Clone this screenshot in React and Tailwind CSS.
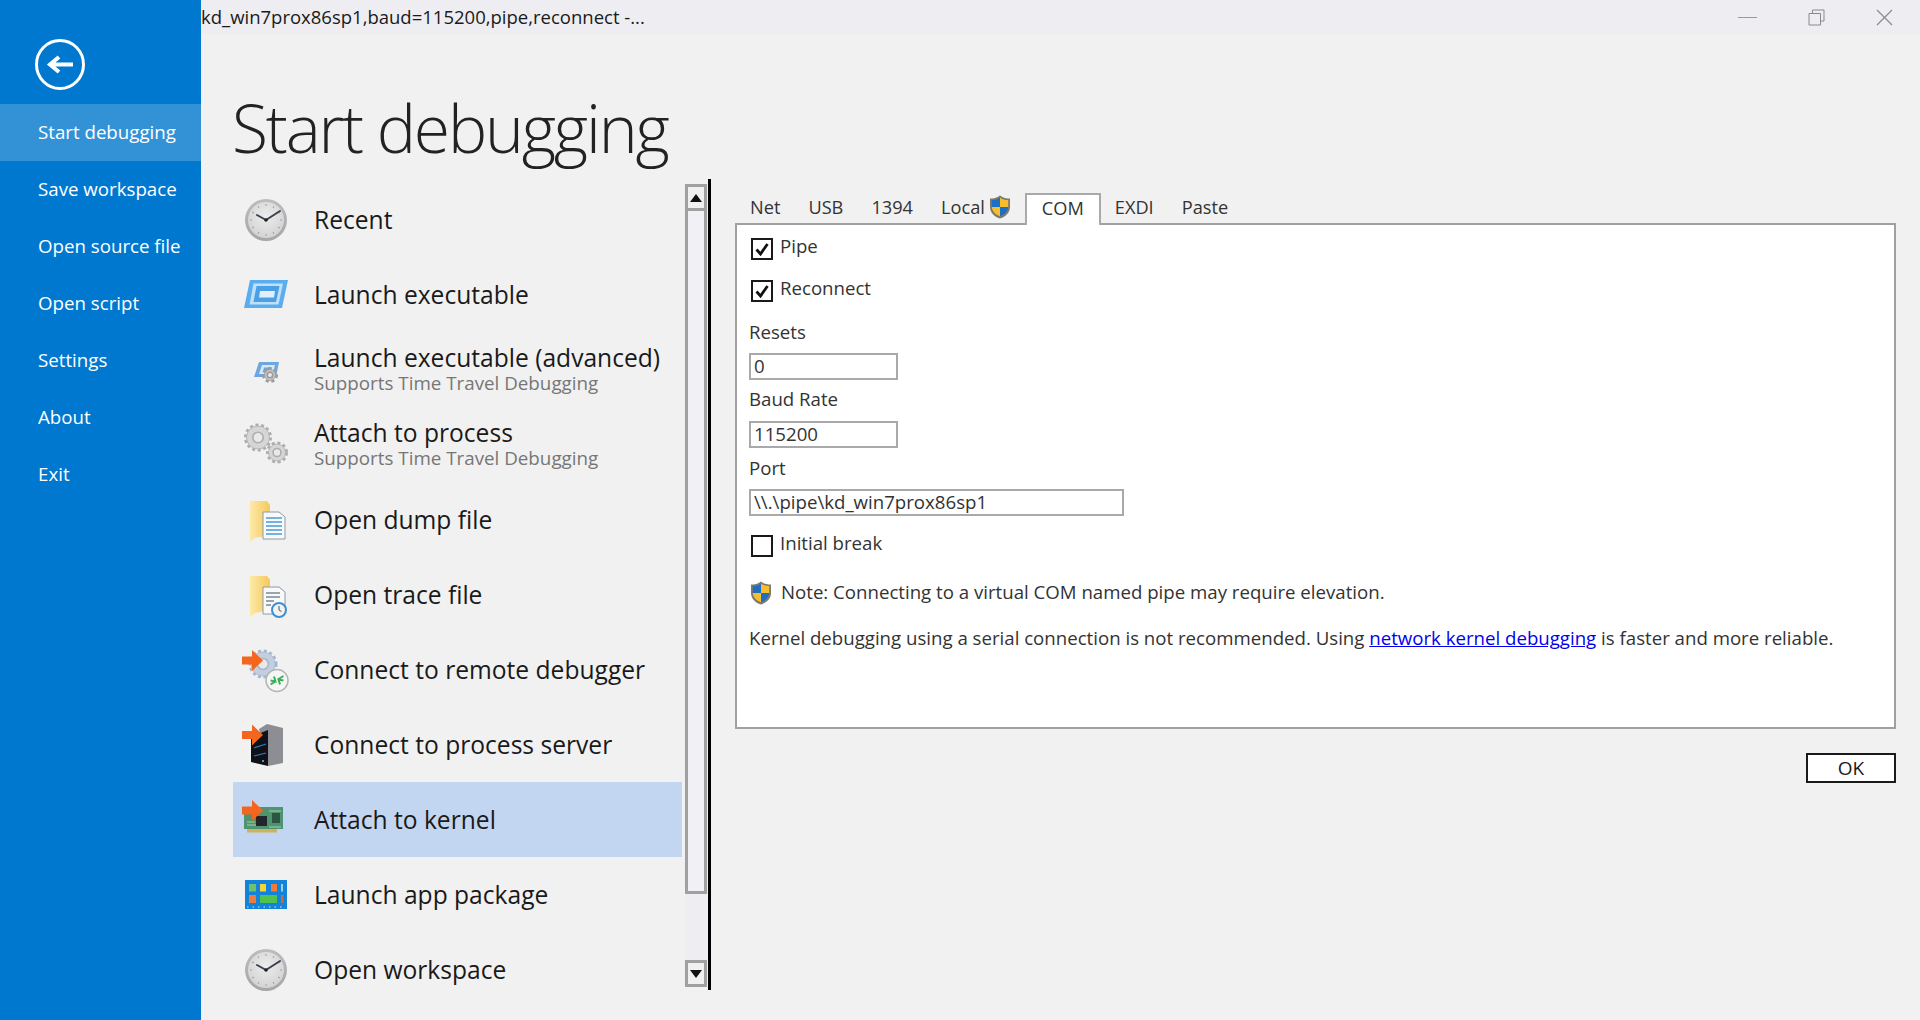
const sidebarItems = ['Start debugging', 'Save workspace', 'Open source file', 'Open script', 'Settings', 'About', 'Exit'];

function Gear({ cx, cy, r, color = '#adadad', fill = '#d6d6d6' }) {
  return (
    <g>
      <circle cx={cx} cy={cy} r={r} fill="none" stroke={color} strokeWidth="3" strokeDasharray="3 2.6" />
      <circle cx={cx} cy={cy} r={r - 1} fill={fill} stroke={color} strokeWidth="0.8" />
      <circle cx={cx} cy={cy} r={r * 0.42} fill="#e9e9e9" stroke={color} strokeWidth="1.6" />
    </g>
  );
}

function OrangeArrow() {
  return <path d="M0 10.500h10V4l11 10.500L10 25v-6.500H0z" fill="#f4661e" />;
}

function ClockIcon() {
  const ticks = [0, 30, 60, 90, 120, 150, 180, 210, 240, 270, 300, 330];
  return (
    <svg width="48" height="48" viewBox="0 0 48 48">
      <defs>
        <linearGradient id="clockRim" x1="0" y1="0" x2="0" y2="1">
          <stop offset="0" stopColor="#bdbdbd" />
          <stop offset="1" stopColor="#a6a6a6" />
        </linearGradient>
        <radialGradient id="clockFace" cx="0.5" cy="0.4" r="0.7">
          <stop offset="0" stopColor="#ececec" />
          <stop offset="1" stopColor="#cfcfcf" />
        </radialGradient>
      </defs>
      <circle cx="24" cy="24" r="21" fill="url(#clockRim)" />
      <circle cx="24" cy="24" r="18" fill="url(#clockFace)" />
      {ticks.map((a) => (
        <line key={a} x1="24" y1="8" x2="24" y2="10" stroke="#a0a0a0" strokeWidth="1" transform={`rotate(${a} 24 24)`} />
      ))}
      <path d="M24 24L15 19M24 24L38 15" stroke="#3a414c" strokeWidth="2" strokeLinecap="round" />
      <circle cx="24" cy="24" r="1.800" fill="#222" />
    </svg>
  );
}

function ExeIcon() {
  return (
    <svg width="48" height="48" viewBox="0 0 48 48">
      <path d="M8 9h38l-6 28H2z" fill="#5aaef0" />
      <path d="M11.500 12.500h29.500l-4.500 21H7.500z" fill="#bfe0f8" />
      <path d="M14.500 15h23l-3.500 16H11.500z" fill="#4a9fe6" />
      <path d="M18 20h15l-1 6.500H17z" fill="#dff0fb" />
    </svg>
  );
}

function ExeAdvIcon() {
  return (
    <svg width="48" height="48" viewBox="0 0 48 48">
      <path d="M17 16h20l-3 15H12z" fill="#6ea6e0" />
      <path d="M20 19h13l-2 9H17z" fill="#d8e8f6" />
      <path d="M22 21.500h8l-1 4H21z" fill="#6ea6e0" />
      <Gear cx={28} cy={29} r={6.500} color="#9a9a9a" fill="#c6c6c6" />
    </svg>
  );
}

function GearsIcon() {
  return (
    <svg width="48" height="48" viewBox="0 0 48 48">
      <Gear cx={16} cy={16.500} r={12.500} />
      <Gear cx={35} cy={31.500} r={9.500} />
    </svg>
  );
}

function DocFolder({ children }) {
  return (
    <svg width="48" height="48" viewBox="0 0 48 48">
      <defs>
        <linearGradient id="folderFill" x1="0" y1="0" x2="1" y2="0">
          <stop offset="0" stopColor="#fde9a8" />
          <stop offset="1" stopColor="#f5c95c" />
        </linearGradient>
      </defs>
      <path d="M8 5h17l3 4v30l-15 3-5 4z" fill="url(#folderFill)" />
      <path d="M21 16h16l6 5v22H21z" fill="#f7f9fb" stroke="#8f9aa5" strokeWidth="1" />
      {children}
    </svg>
  );
}

function DumpIcon() {
  return (
    <DocFolder>
      <path d="M24 22h16M24 26h16M24 30h16M24 34h16M24 38h16" stroke="#4a9ad8" strokeWidth="1.500" />
    </DocFolder>
  );
}

function TraceIcon() {
  return (
    <DocFolder>
      <path d="M24 22h14M24 26h14M24 30h8M24 34h5" stroke="#7d8893" strokeWidth="1.500" />
      <circle cx="37" cy="39" r="7" fill="#f2f2f2" stroke="#3f8fd0" strokeWidth="2" />
      <path d="M37 35V39l2.500 1.500" stroke="#555" strokeWidth="1" fill="none" />
    </DocFolder>
  );
}

function RemoteIcon() {
  return (
    <svg width="48" height="48" viewBox="0 0 48 48">
      <Gear cx={21} cy={18} r={13} color="#a5b6cd" fill="#c3cfde" />
      <circle cx="35" cy="34.500" r="11" fill="#f6f6f6" stroke="#b5b5b5" strokeWidth="1.500" />
      <path d="M28.500 38.500l5-3M36.500 33l5-3M32 30.500l1.500 5-5-1M38 38.500l-1.500-5 5 1" stroke="#3bae5a" strokeWidth="2" fill="none" />
      <OrangeArrow />
    </svg>
  );
}

function ServerIcon() {
  return (
    <svg width="48" height="48" viewBox="0 0 48 48">
      <path d="M17 8l8-5 16 4v35l-15 3z" fill="#8c8e93" />
      <path d="M9 16l17-7v36l-17-4z" fill="#0f1116" />
      <path d="M12 27l12-4M12 35l12-3" stroke="#2c7fc5" strokeWidth="1.200" />
      <circle cx="21" cy="40" r="1" fill="#8ab4d9" />
      <g transform="translate(0 -0.500)"><OrangeArrow /></g>
    </svg>
  );
}

function KernelIcon() {
  return (
    <svg width="48" height="48" viewBox="0 0 48 48">
      <rect x="2" y="11" width="39" height="22" fill="#4f9470" />
      <path d="M5 26h8M5 29h9M27 15h12M27 31h12M14 16v4" stroke="#9fd0a8" strokeWidth="1" />
      <rect x="14" y="20" width="11" height="10" fill="#20262b" />
      <rect x="30" y="17" width="8" height="10" fill="#2e5443" />
      <rect x="5" y="33" width="30" height="3.500" fill="#cfb260" />
      <OrangeArrow />
    </svg>
  );
}

function AppIcon() {
  return (
    <svg width="48" height="48" viewBox="0 0 48 48">
      <rect x="3" y="9" width="42" height="29" fill="#1283d8" />
      <rect x="7" y="13" width="7" height="7.500" fill="#6ec26a" />
      <rect x="18" y="13" width="6" height="7.500" fill="#f4d437" />
      <rect x="29" y="13" width="6" height="7.500" fill="#ee7b3b" />
      <rect x="39" y="13" width="2" height="7.500" fill="#8fd5f2" />
      <rect x="7" y="24" width="7" height="8" fill="#ee7b3b" />
      <rect x="18" y="24" width="17" height="8" fill="#4fc24f" />
      <rect x="39" y="24" width="2.500" height="8" fill="#c56b4a" />
      <path d="M5 36h38" stroke="#cfe7f8" strokeWidth="1" strokeDasharray="1.500 4" />
    </svg>
  );
}

const listItems = [
  { label: 'Recent', icon: <ClockIcon /> },
  { label: 'Launch executable', icon: <ExeIcon /> },
  { label: 'Launch executable (advanced)', sub: 'Supports Time Travel Debugging', icon: <ExeAdvIcon /> },
  { label: 'Attach to process', sub: 'Supports Time Travel Debugging', icon: <GearsIcon /> },
  { label: 'Open dump file', icon: <DumpIcon /> },
  { label: 'Open trace file', icon: <TraceIcon /> },
  { label: 'Connect to remote debugger', icon: <RemoteIcon /> },
  { label: 'Connect to process server', icon: <ServerIcon /> },
  { label: 'Attach to kernel', icon: <KernelIcon />, selected: true },
  { label: 'Launch app package', icon: <AppIcon /> },
  { label: 'Open workspace', icon: <ClockIcon /> }
];

function Shield({ className }) {
  return (
    <svg className={className} viewBox="0 0 22 24">
      <path d="M11 0.500C8 3 4.500 3.500 1 3.500V12c0 5.500 4 9.500 10 11.500 6-2 10-6 10-11.500V3.500C17.500 3.500 14 3 11 0.500z" fill="#7d7a6c" />
      <path d="M11 2.500V12H2.800V5C6 5 9 4.500 11 2.500z" fill="#1c6fc4" />
      <path d="M11 2.500V12h8.200V5C16 5 13 4.500 11 2.500z" fill="#f6be2c" />
      <path d="M11 12H2.800c.3 4.300 3.500 7.500 8.200 9.300z" fill="#f6be2c" />
      <path d="M11 12h8.200c-.3 4.300-3.500 7.500-8.200 9.300z" fill="#1c6fc4" />
    </svg>
  );
}

function Checkbox({ checked }) {
  return (
    <div className="w-[22px] h-[22px] border-2 border-[#1a1a1a] bg-white flex items-center justify-center shrink-0">
      {checked && (
        <svg width="16" height="16" viewBox="0 0 16 16">
          <path d="M2.500 8.500L6.500 13 13.500 3" fill="none" stroke="#111" strokeWidth="2.800" />
        </svg>
      )}
    </div>
  );
}

function CheckRow({ label, checked, className }) {
  return (
    <div className={`flex items-start gap-[7px] ml-[2px] ${className}`}>
      <Checkbox checked={checked} />
      <span className="leading-[16px]">{label}</span>
    </div>
  );
}

function Field({ value, className }) {
  return (
    <div className={`h-[27px] border-2 border-[#a9a9a9] pl-[3px] leading-[21px] ${className}`}>{value}</div>
  );
}

function ScrollButton({ down }) {
  return (
    <div className="h-[27px] border-[3px] border-[#a0a0a0] bg-[#f0f0f0] flex items-center justify-center shrink-0">
      <svg width="12" height="8" viewBox="0 0 12 8">
        <path d={down ? 'M0 0h12L6 8z' : 'M6 0l6 8H0z'} fill="#111" />
      </svg>
    </div>
  );
}

export default function App() {
  return (
    <div className="flex h-[1020px] overflow-hidden bg-[#f1f1f1] text-[#1a1a1a] font-['Open_Sans',sans-serif]">

      <div className="w-[201px] shrink-0 bg-[#0078cf] text-white">
        <div className="h-[104px] pl-[35px] pt-[39px]">
          <svg width="50" height="51" viewBox="0 0 50 51">
            <ellipse cx="25" cy="25.500" rx="23.500" ry="24" fill="none" stroke="#fff" strokeWidth="3" />
            <path d="M38 25.500H16M24 18l-9 7.500 9 7.500" fill="none" stroke="#fff" strokeWidth="4" />
          </svg>
        </div>
        {sidebarItems.map((item, i) => (
          <div key={item} className={`h-[57px] pl-[38px] flex items-center text-[18.700px] ${i === 0 ? 'bg-[#3392d6]' : ''}`}>
            {item}
          </div>
        ))}
      </div>

      <div className="flex-1 min-w-0 flex flex-col">
        <div className="h-[34px] bg-[#eeeef2] flex items-center justify-between shrink-0">
          <span className="text-[18.500px]">kd_win7prox86sp1,baud=115200,pipe,reconnect -...</span>
          <div className="flex items-center gap-[51px] pr-[27px] h-full">
            <div className="w-[19px] h-[1px] bg-[#9a9a9a]"></div>
            <svg width="17" height="17" viewBox="0 0 17 17">
              <path d="M4.500 4V1H16V12H13M1 4.500H12.500V16H1z" fill="none" stroke="#8a8a8a" />
            </svg>
            <svg width="17" height="17" viewBox="0 0 17 17">
              <path d="M1 1L16 16M16 1L1 16" stroke="#8a8a8a" strokeWidth="1.200" />
            </svg>
          </div>
        </div>

        <div className="h-[145px] shrink-0 pl-[31px] pt-[55px]">
          <h1 className="text-[66px] leading-[76px] font-light tracking-[-2.200px] text-[#222]">Start debugging</h1>
        </div>

        <div className="flex-1 flex pl-[32px] items-start">
          <div className="w-[449px] pt-[3px] shrink-0">
            {listItems.map((item) => (
              <div key={item.label} className={`h-[75px] pl-[9px] flex items-center gap-[24px] ${item.selected ? 'bg-[#c3d6f1]' : ''}`}>
                <div className="w-[48px] h-[48px] shrink-0">{item.icon}</div>
                <div>
                  <p className="text-[24.600px] leading-[27px]">{item.label}</p>
                  {item.sub && <p className="text-[18.800px] leading-[25px] text-[#767676]">{item.sub}</p>}
                </div>
              </div>
            ))}
          </div>

          <div className="ml-[3px] mt-[5px] w-[22px] h-[803px] flex flex-col bg-[#ededf2] shrink-0">
            <ScrollButton />
            <div className="h-[683px] border-[3px] border-t-0 border-[#a0a0a0] bg-[#f0f0f5] shrink-0"></div>
            <div className="flex-1"></div>
            <ScrollButton down />
          </div>

          <div className="ml-[1px] w-[3px] h-[811px] bg-black shrink-0"></div>

          <div className="ml-[24px] w-[1161px] pt-[14px] shrink-0">
            <div className="flex items-start h-[30px] pl-[1px] text-[18.200px] text-[#333]">
              <div className="px-[14px] leading-[28px]">Net</div>
              <div className="px-[14px] leading-[28px]">USB</div>
              <div className="px-[14px] leading-[28px]">1394</div>
              <div className="px-[14px] h-[28px] leading-[28px] flex items-center gap-[4px]">Local<Shield className="w-[22px] h-[24px]" /></div>
              <div className="relative z-10 h-[32px] px-[15px] leading-[26px] bg-white border-2 border-b-0 border-[#a9a9a9]">COM</div>
              <div className="px-[14px] leading-[28px]">EXDI</div>
              <div className="px-[14px] leading-[28px]">Paste</div>
            </div>

            <div className="h-[506px] bg-white border-2 border-[#a0a0a0] pl-[12px] text-[18.650px] text-[#333]">
              <CheckRow label="Pipe" checked className="mt-[13px]" />
              <CheckRow label="Reconnect" checked className="mt-[20px]" />
              <p className="mt-[18px] leading-[24px]">Resets</p>
              <Field value="0" className="mt-[9px] w-[149px]" />
              <p className="mt-[7px] leading-[23px]">Baud Rate</p>
              <Field value="115200" className="mt-[11px] w-[149px]" />
              <p className="mt-[8px] leading-[24px]">Port</p>
              <Field value="\\.\pipe\kd_win7prox86sp1" className="mt-[9px] w-[375px]" />
              <CheckRow label="Initial break" className="mt-[19px]" />
              <div className="mt-[24px] flex items-center gap-[9px] ml-[1px] h-[24px]">
                <Shield className="w-[22px] h-[24px]" />
                <span className="-mt-[2px]">Note: Connecting to a virtual COM named pipe may require elevation.</span>
              </div>
              <p className="mt-[21px] leading-[24px]">
                Kernel debugging using a serial connection is not recommended. Using <a className="text-[#0000ee] underline">network kernel debugging</a> is faster and more reliable.
              </p>
            </div>

            <div className="flex justify-end mt-[24px]">
              <div className="w-[90px] h-[30px] border-2 border-[#1a1a1a] bg-white flex items-center justify-center text-[19px]">OK</div>
            </div>
          </div>
        </div>
      </div>

    </div>
  );
}
